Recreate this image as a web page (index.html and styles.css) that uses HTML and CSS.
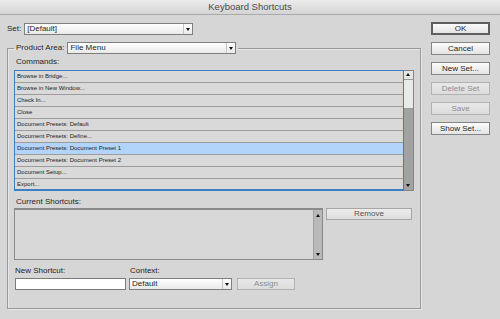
FILE: index.html
```html
<!DOCTYPE html>
<html>
<head>
<meta charset="utf-8">
<link rel="stylesheet" href="styles.css">
</head>
<body>
<div class="window">
  <div class="titlebar">Keyboard Shortcuts</div>
  <div class="content">
    <div class="left">
      <div class="set-row">
        <span class="lbl">Set:</span>
        <div class="select"><span class="val">[Default]</span><span class="arrow"></span></div>
      </div>
      <fieldset class="area">
        <legend class="legend">
          <span class="lbl">Product Area:</span>
          <div class="select"><span class="val">File Menu</span><span class="arrow"></span></div>
        </legend>
        <div class="lbl cmd-lbl">Commands:</div>
        <div class="list-wrap">
          <ul class="list">
            <li>Browse in Bridge...</li>
            <li>Browse in New Window...</li>
            <li>Check In...</li>
            <li>Close</li>
            <li>Document Presets: Default</li>
            <li>Document Presets: Define...</li>
            <li class="sel">Document Presets: Document Preset 1</li>
            <li>Document Presets: Document Preset 2</li>
            <li>Document Setup...</li>
            <li>Export...</li>
          </ul>
          <div class="vscroll">
            <div class="sb-btn"><span class="up"></span></div>
            <div class="thumb"></div>
            <div class="track"></div>
            <div class="sb-btn dark"><span class="down"></span></div>
          </div>
        </div>
        <div class="lbl cur-lbl">Current Shortcuts:</div>
        <div class="cur-row">
          <div class="cur-box">
            <div class="mini-scroll">
              <span class="up small"></span>
              <span class="down small"></span>
            </div>
          </div>
          <button class="btn remove">Remove</button>
        </div>
        <div class="new-row">
          <div class="col">
            <div class="lbl">New Shortcut:</div>
            <div class="input"></div>
          </div>
          <div class="col">
            <div class="lbl ctx-lbl">Context:</div>
            <div class="select ctx"><span class="val">Default</span><span class="arrow"></span></div>
          </div>
          <button class="btn disabled assign">Assign</button>
        </div>
      </fieldset>
    </div>
    <div class="right">
      <button class="btn default">OK</button>
      <button class="btn">Cancel</button>
      <button class="btn">New Set...</button>
      <button class="btn disabled">Delete Set</button>
      <button class="btn disabled">Save</button>
      <button class="btn">Show Set...</button>
    </div>
  </div>
</div>
</body>
</html>
```
FILE: styles.css
```css
* { box-sizing: border-box; }
html, body {
  margin: 0;
  padding: 0;
  width: 500px;
  height: 319px;
  overflow: hidden;
  background: #d6d6d6;
  font-family: "Liberation Sans", Arial, sans-serif;
  color: #1e1e1e;
}
.window { width: 500px; height: 319px; }
.titlebar {
  height: 15px;
  line-height: 14px;
  text-align: center;
  font-size: 9.5px;
  color: #4b4b4b;
  background: linear-gradient(#ececec, #d4d4d4);
  border-bottom: 1px solid #a9a9a9;
}
.content {
  display: flex;
}
.left {
  padding-left: 7px;
  width: 421px;
}
.lbl {
  font-size: 8px;
  line-height: 10px;
  color: #1e1e1e;
}
.set-row {
  margin-top: 8px;
  display: flex;
  align-items: center;
  gap: 3px;
}
.select {
  display: flex;
  align-items: center;
  width: 169px;
  height: 12px;
  border: 1px solid #7f7f7f;
  background: linear-gradient(#ffffff, #e9e9e9);
  font-size: 8px;
  line-height: 10px;
}
.select .val {
  flex: 1;
  padding-left: 2px;
}
.select .arrow {
  width: 9px;
  height: 10px;
  border-left: 1px solid #c4c4c4;
  position: relative;
}
.select .arrow::after {
  content: "";
  position: absolute;
  left: 2px;
  top: 4px;
  border-left: 2.5px solid transparent;
  border-right: 2.5px solid transparent;
  border-top: 3px solid #111;
}
.area {
  margin: 7px 0 0 0;
  padding: 0 6px 18px 6px;
  width: 414px;
  border: 1px solid #9a9a9a;
  box-shadow: inset 1px 1px 0 #e6e6e6, 1px 1px 0 #e6e6e6;
}
.legend {
  padding: 0 2px;
  display: flex;
  align-items: center;
  gap: 3px;
}
.cmd-lbl { margin-top: 3px; padding-left: 2px; }
.list-wrap {
  margin-top: 3px;
  display: flex;
  height: 121px;
}
.list {
  list-style: none;
  margin: 0;
  padding: 0;
  width: 390px;
  border: 1px solid #3d7fc2;
  border-bottom-width: 2px;
  background: #d9d9d9;
}
.list li {
  height: 12px;
  line-height: 11px;
  font-size: 6px;
  padding-left: 2px;
  border-bottom: 1px solid #9c9c9c;
  color: #222;
}
.list li:last-child { border-bottom: none; }
.list li.sel { background: #b3d4fa; }
.vscroll {
  width: 10px;
  border: 1px solid #858585;
  border-left: none;
  display: flex;
  flex-direction: column;
  background: #a2a2a2;
}
.sb-btn {
  height: 9px;
  background: #e6e6e6;
  border-bottom: 1px solid #9a9a9a;
  position: relative;
}
.sb-btn.dark {
  background: #a2a2a2;
  border-bottom: none;
  border-top: none;
}
.thumb {
  height: 29px;
  background: #e9e9e9;
  border-bottom: 1px solid #9a9a9a;
}
.track { flex: 1; }
.up, .down {
  position: absolute;
  left: 2px;
  width: 0;
  height: 0;
  border-left: 2.5px solid transparent;
  border-right: 2.5px solid transparent;
}
.up { top: 2px; border-bottom: 3px solid #111; }
.down { top: 3px; border-top: 3px solid #111; }
.cur-lbl { margin-top: 6px; padding-left: 2px; }
.cur-row {
  margin-top: 1px;
  display: flex;
  gap: 3px;
  align-items: flex-start;
}
.cur-box {
  width: 309px;
  height: 52px;
  border: 1px solid #8a8a8a;
  border-top-width: 2px;
  background: #d8d8d8;
  display: flex;
  justify-content: flex-end;
}
.mini-scroll {
  width: 9px;
  background: #b9b9b9;
  border-left: 1px solid #a0a0a0;
  position: relative;
}
.mini-scroll .up { top: 4px; left: 1.5px; border-left-width: 2px; border-right-width: 2px; border-bottom-width: 3px; }
.mini-scroll .down { top: auto; bottom: 3px; left: 1.5px; border-left-width: 2px; border-right-width: 2px; border-top-width: 3px; }
.btn {
  display: block;
  margin: 0;
  padding: 0;
  height: 13px;
  font-family: "Liberation Sans", Arial, sans-serif;
  font-size: 8px;
  line-height: 11px;
  color: #1e1e1e;
  border: 1px solid #858585;
  background: linear-gradient(#fbfbfb, #e4e4e4);
  text-align: center;
}
.btn.disabled {
  color: #8d8d8d;
  border-color: #b2b2b2;
  background: linear-gradient(#e8e8e8, #dcdcdc);
}
.btn.default {
  border: 2px solid #5f5f5f;
  line-height: 9px;
}
.remove {
  width: 86px;
  height: 12px;
  color: #555;
  border-color: #a6a6a6;
  background: linear-gradient(#ececec, #dedede);
  line-height: 10px;
}
.new-row {
  margin-top: 5px;
  display: flex;
  align-items: flex-end;
}
.col {
  display: flex;
  flex-direction: column;
  gap: 2px;
}
.col .lbl { padding-left: 1px; }
.input {
  margin-left: 1px;
  width: 111px;
  height: 12px;
  background: #fff;
  border: 1px solid #7a7a7a;
}
.col:nth-child(2) { margin-left: 3px; }
.ctx-lbl { padding-top: 1px; }
.select.ctx { width: 103px; }
.assign {
  margin-left: 5px;
  width: 58px;
  height: 12px;
  line-height: 10px;
}
.right {
  margin-left: 10px;
  padding-top: 7px;
  display: flex;
  flex-direction: column;
  gap: 7px;
}
.right .btn { width: 59px; }
```
